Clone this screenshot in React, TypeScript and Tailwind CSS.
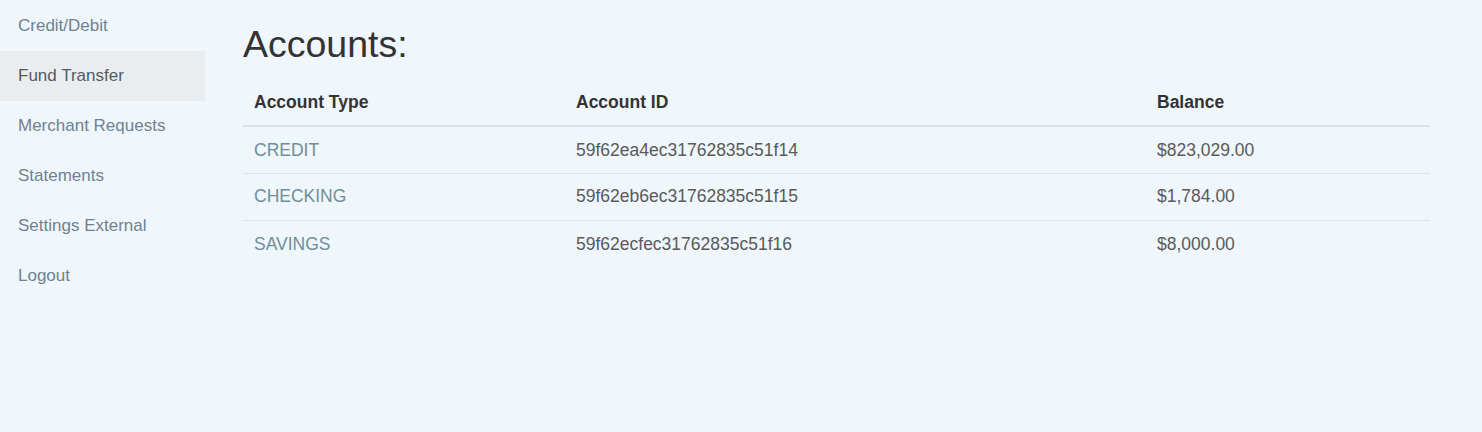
const navItems = [
  'Credit/Debit',
  'Fund Transfer',
  'Merchant Requests',
  'Statements',
  'Settings External',
  'Logout',
];

const accounts = [
  { type: 'CREDIT', id: '59f62ea4ec31762835c51f14', balance: '$823,029.00' },
  { type: 'CHECKING', id: '59f62eb6ec31762835c51f15', balance: '$1,784.00' },
  { type: 'SAVINGS', id: '59f62ecfec31762835c51f16', balance: '$8,000.00' },
];

export default function App() {
  return (
    <div className="flex h-[432px] w-full bg-[#eff6fc] font-['Liberation_Sans',Arial,sans-serif]">
      <nav className="w-[205px] shrink-0 pt-[1px]">
        {navItems.map((item) => (
          <div
            key={item}
            className={
              item === 'Fund Transfer'
                ? 'flex h-[50px] items-center bg-[#eaedf0] pl-[18px] text-[17px] text-[#4f5b66]'
                : 'flex h-[50px] items-center pl-[18px] text-[17px] text-[#6f8291]'
            }
          >
            {item}
          </div>
        ))}
      </nav>
      <main className="ml-[38px] w-[1187px] pt-[22px]">
        <h1 className="text-[37.5px] leading-[44px] text-[#333]">Accounts:</h1>
        <table className="mt-[14px] w-full border-collapse text-[17.5px]">
          <thead>
            <tr className="h-[46px] border-b-2 border-[#dde2e6] text-left">
              <th className="w-[323px] pl-[11px] font-bold text-[#333]">Account Type</th>
              <th className="w-[581px] pl-[10px] font-bold text-[#333]">Account ID</th>
              <th className="pl-[10px] font-bold text-[#333]">Balance</th>
            </tr>
          </thead>
          <tbody>
            {accounts.map((a, i) => (
              <tr
                key={a.id}
                className={i < accounts.length - 1 ? 'h-[47px] border-b border-[#dde2e6]' : 'h-[47px]'}
              >
                <td className="pl-[11px] text-[#6f8f9b]">{a.type}</td>
                <td className="pl-[10px] text-[#5a5a5a]">{a.id}</td>
                <td className="pl-[10px] text-[#5a5a5a]">{a.balance}</td>
              </tr>
            ))}
          </tbody>
        </table>
      </main>
    </div>
  );
}
